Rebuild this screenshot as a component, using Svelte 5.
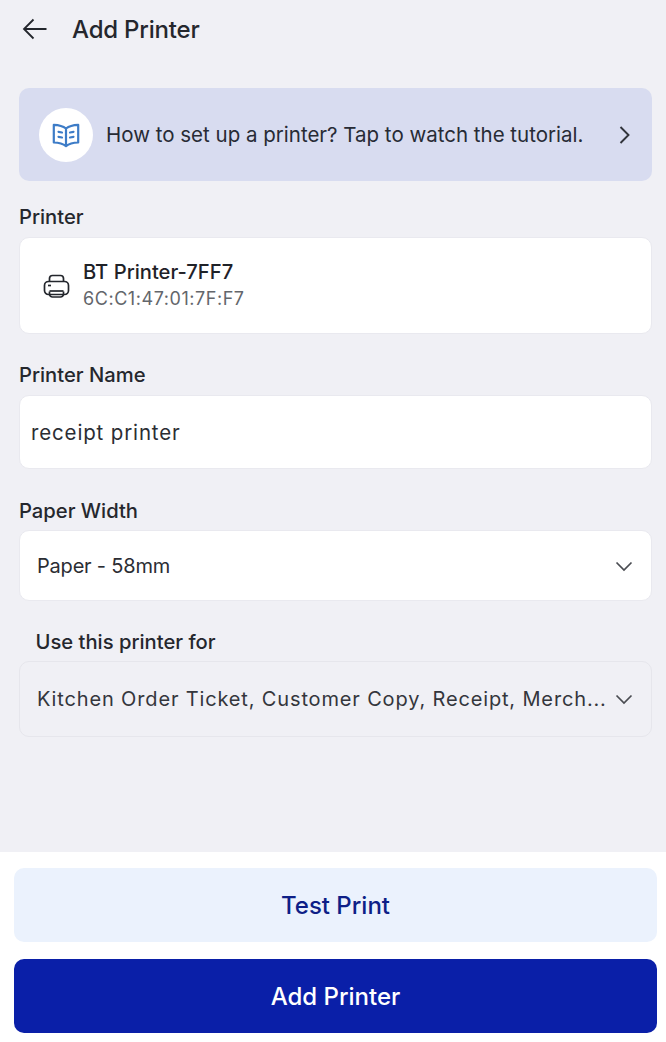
<script lang="ts">
  const name = 'BT Printer-7FF7';
  const mac = '6C:C1:47:01:7F:F7';
</script>

<div class="page">
  <header class="top">
    <svg class="back" width="28" height="24" viewBox="0 0 28 24" fill="none" stroke="currentColor" stroke-width="1.8">
      <path d="M25.5 12H3M12.5 2.5 3 12l9.500 9.500" />
    </svg>
    <h1>Add Printer</h1>
  </header>

  <main class="form">
    <div class="banner">
      <span class="circle">
        <svg width="28" height="26" viewBox="0 0 28 26" fill="none" stroke="#3d7cc7" stroke-width="2.2" stroke-linejoin="round" stroke-linecap="round">
          <path d="M14 6.500C11.500 4.500 7 3 1.800 2.800V20.500c5 .2 9.500 1.500 12.200 3.500 2.700-2 7.200-3.300 12.200-3.500V2.800C21 3 16.500 4.500 14 6.500ZM14 6.500V24" />
          <path d="M6.500 9.800l3.500 .7M6.500 14.800l3.500 .7M18 10.500l3.500-.7M18 15.500l3.500-.7" />
        </svg>
      </span>
      <span class="banner-text">How to set up a printer? Tap to watch the tutorial.</span>
      <svg class="chev-right" width="14" height="20" viewBox="0 0 14 20" fill="none" stroke="currentColor" stroke-width="1.9">
        <path d="M2.500 2 10.500 10l-8 8" />
      </svg>
    </div>

    <div class="label first">Printer</div>
    <div class="card printer">
      <svg width="28" height="28" viewBox="0 0 28 28" fill="none" stroke="#23262c" stroke-width="1.700" stroke-linejoin="round">
        <path d="M7.500 9.500V6.500a3 3 0 0 1 3-3h8a3 3 0 0 1 3 3v3" />
        <rect x="2.500" y="9.500" width="24" height="13" rx="4" />
        <path d="M7.500 19.500v2.500a3 3 0 0 0 3 3h8a3 3 0 0 0 3-3v-2.500" />
        <path d="M7.500 19h14" />
        <path d="M6 13.500h3" />
      </svg>
      <div class="printer-info">
        <span class="printer-name">{name}</span>
        <span class="printer-mac">{mac}</span>
      </div>
    </div>

    <div class="label">Printer Name</div>
    <div class="card name-input">receipt printer</div>

    <div class="label paper">Paper Width</div>
    <div class="card select">
      <span class="value">Paper - 58mm</span>
      <svg class="chev" width="18" height="12" viewBox="0 0 18 12" fill="none" stroke="currentColor" stroke-width="1.7">
        <path d="M1.500 2.500 9 10l7.500-7.500" />
      </svg>
    </div>

    <div class="label use">Use this printer for</div>
    <div class="card select disabled">
      <span class="value">Kitchen Order Ticket, Customer Copy, Receipt, Merch...</span>
      <svg class="chev" width="18" height="12" viewBox="0 0 18 12" fill="none" stroke="currentColor" stroke-width="1.7">
        <path d="M1.500 2.500 9 10l7.500-7.500" />
      </svg>
    </div>
  </main>

  <footer class="actions">
    <button class="btn test">Test Print</button>
    <button class="btn add">Add Printer</button>
  </footer>
</div>

<style>
  :global(body) { margin: 0; background: #f0f0f5; }

  .page {
    width: 666px; height: 1042px; overflow: hidden;
    display: flex; flex-direction: column;
    background: #f0f0f5; color: #1f2228;
    font-family: Inter, "Noto Sans", sans-serif;
  }

  .top { height: 58px; display: flex; align-items: center; padding-left: 21px; box-sizing: border-box; flex-shrink: 0; }
  .back { color: #23262c; margin-right: 23px; }
  h1 { margin: 0; font-size: 24px; font-weight: 500; letter-spacing: -0.2px; color: #25272d; }

  .form { flex: 1; padding: 30px 14px 0 19px; }

  .banner {
    height: 93px; box-sizing: border-box; padding: 0 20px 0 20px;
    display: flex; align-items: center;
    background: #d8dcf0; border-radius: 10px;
  }
  .circle {
    width: 54px; height: 54px; border-radius: 50%; background: #fff;
    display: flex; align-items: center; justify-content: center; flex-shrink: 0;
    margin-right: 13px;
  }
  .banner-text { flex: 1; font-size: 20.500px; font-weight: 400; color: #272b35; white-space: nowrap; }
  .chev-right { color: #31343b; }

  .label { font-size: 20.200px; font-weight: 500; line-height: 24px; color: #25272d; margin: 29px 0 8px; }
  .label.first { margin-top: 24px; }
  .label.paper { margin: 30px 0 7px; }
  .label.use { margin: 29px 0 7px 16.500px; }

  .card {
    box-sizing: border-box; background: #fff; border-radius: 10px;
    border: 1px solid #e9e9ef;
  }

  .printer { height: 97px; display: flex; align-items: center; padding-left: 22px; gap: 13px; }
  .printer-info { display: flex; flex-direction: column; gap: 1px; margin-top: -1px; }
  .printer-name { font-size: 20.200px; font-weight: 500; line-height: 26px; color: #1f2228; }
  .printer-mac { font-size: 18px; line-height: 25px; color: #63666b; letter-spacing: 0.55px; }

  .name-input {
    height: 74px; display: flex; align-items: center; padding-left: 11px;
    font-size: 20.500px; letter-spacing: 0.85px; color: #2b2d33;
  }

  .select {
    height: 71px; display: flex; align-items: center; justify-content: space-between;
    padding: 0 18px 0 17px;
  }
  .select .value { font-size: 20px; letter-spacing: -0.2px; color: #2b2d33; white-space: nowrap; }
  .chev { color: #4a4c52; flex-shrink: 0; }
  .disabled { height: 76px; background: #f0f0f5; border-color: #e6e6ec; }
  .select.disabled .value { letter-spacing: 0.85px; color: #34363c; }

  .actions {
    height: 190px; box-sizing: border-box; flex-shrink: 0;
    background: #fff; padding: 16px 9px 0 14px;
    display: flex; flex-direction: column; gap: 17px;
  }
  .btn {
    height: 74px; border: 0; border-radius: 10px; padding: 0;
    font-family: inherit; font-size: 24px; font-weight: 500;
  }
  .test { background: #ebf2fd; color: #0e1f87; }
  .add { background: #0a1fa8; color: #fff; }
</style>
